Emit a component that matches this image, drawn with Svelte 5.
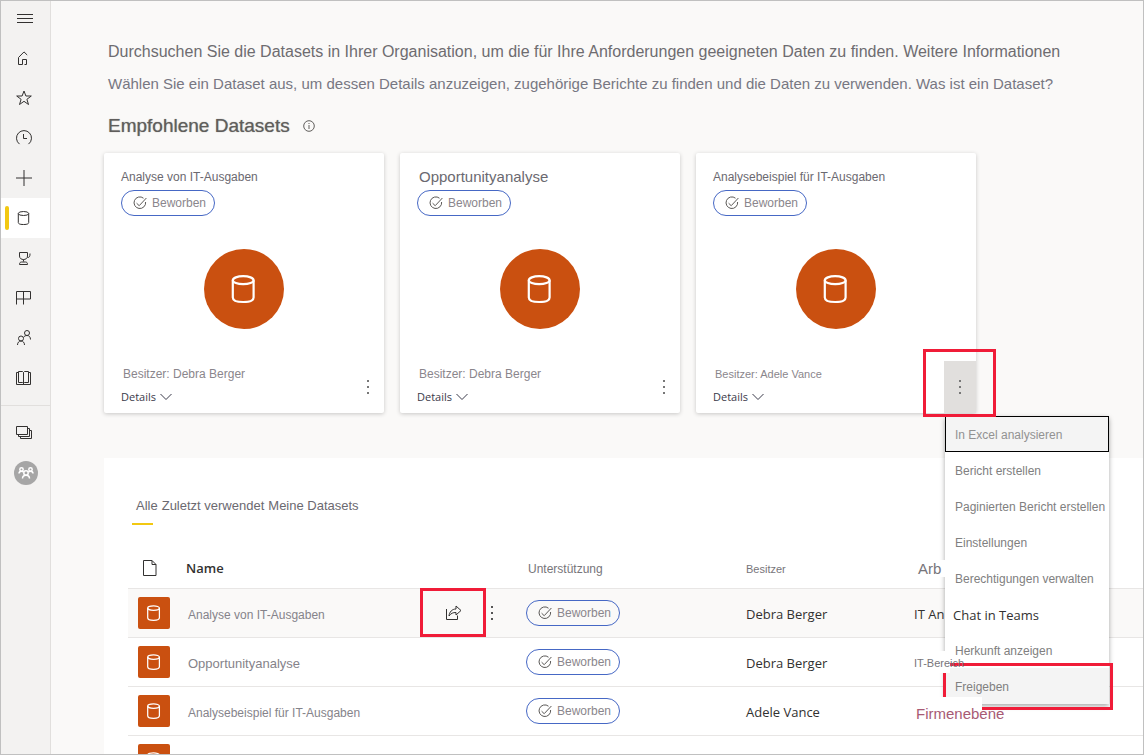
<script lang="ts">
	type IconName = 'menu' | 'home' | 'star' | 'clock' | 'plus' | 'data' | 'goals' | 'apps' | 'people' | 'book' | 'workspaces';

	const navItems: { icon: IconName; label: string }[] = [
		{ icon: 'menu', label: 'Navigation' },
		{ icon: 'home', label: 'Start' },
		{ icon: 'star', label: 'Favoriten' },
		{ icon: 'clock', label: 'Zuletzt verwendet' },
		{ icon: 'plus', label: 'Erstellen' },
		{ icon: 'data', label: 'Datasets' },
		{ icon: 'goals', label: 'Ziele' },
		{ icon: 'apps', label: 'Apps' },
		{ icon: 'people', label: 'Für mich freigegeben' },
		{ icon: 'book', label: 'Lernen' }
	];

	const cards = [
		{ title: 'Analyse von IT-Ausgaben', owner: 'Debra Berger' },
		{ title: 'Opportunityanalyse', owner: 'Debra Berger', large: true },
		{ title: 'Analysebeispiel für IT-Ausgaben', owner: 'Adele Vance', small: true, open: true }
	];

	const menuItems = [
		'In Excel analysieren',
		'Bericht erstellen',
		'Paginierten Bericht erstellen',
		'Einstellungen',
		'Berechtigungen verwalten',
		'Chat in Teams',
		'Herkunft anzeigen',
		'Freigeben'
	];

	const tabs = ['Alle', 'Zuletzt verwendet', 'Meine Datasets'];

	const rows = [
		{ name: 'Analyse von IT-Ausgaben', owner: 'Debra Berger', area: 'IT An', kind: 'plain' },
		{ name: 'Opportunityanalyse', owner: 'Debra Berger', area: 'IT-Bereich', kind: 'small', large: true },
		{ name: 'Analysebeispiel für IT-Ausgaben', owner: 'Adele Vance', area: 'Firmenebene', kind: 'accent' }
	];

	let activeNav = $state('data');
	let activeTab = $state('Alle');
	let selectedRow = $state(0);
</script>

{#snippet cylinder(size: number)}
	<svg width={size} height={size} viewBox="0 0 16 16" fill="none" stroke="currentColor" stroke-width="1.1" aria-hidden="true">
		<ellipse cx="7.6" cy="3.6" rx="5.2" ry="2" />
		<path d="M2.4 3.600v8.600c0 1.200 1 2.300 5.200 2.300s5.200-1.100 5.200-2.300V3.600" />
	</svg>
{/snippet}

{#snippet dots()}
	<svg width="4" height="16" viewBox="0 0 4 16" fill="currentColor" shape-rendering="crispEdges" aria-hidden="true">
		<path d="M1 1h2v2H1zM1 7h2v2H1zM1 13h2v2H1z" />
	</svg>
{/snippet}

{#snippet badge()}
	<span class="badge">
		<svg width="14" height="14" viewBox="0 0 14 14" fill="none" stroke="#5a5856" aria-hidden="true">
			<path d="M10.500 2.200A5.800 5.800 0 1 0 12.600 6" />
			<path d="M3.600 7.200l2.600 2.500L13.400 2" />
		</svg>
		Beworben
	</span>
{/snippet}

{#snippet navIcon(name: IconName)}
	<svg width="18" height="18" viewBox="0 0 18 18" fill="none" stroke="currentColor" aria-hidden="true">
		{#if name === 'menu'}
			<path d="M2 5.500h16M2 9.500h16M2 13.500h16" />
		{:else if name === 'home'}
			<path d="M12.200 6L9 2.900 3.500 8.500v7H7.500v-5h4v5H9.500" />
		{:else if name === 'star'}
			<path d="M9 2l1.900 5h5.400l-4.400 3.300 1.600 5.200L9 12.300l-4.500 3.200 1.600-5.200L1.700 7h5.400z" />
		{:else if name === 'clock'}
			<path d="M4.500 15.100A7.500 7.500 0 1 1 13.500 15.100M8.500 5v4.500h3.500" />
		{:else if name === 'plus'}
			<path d="M1 9h16M9 1v16" />
		{:else if name === 'data'}
			<ellipse cx="8.500" cy="4.500" rx="5.200" ry="2" />
			<path d="M3.300 4.500v9c0 1 .8 2 5.200 2s5.200-1 5.200-2v-9" />
		{:else if name === 'goals'}
			<path d="M4.500 3.500h8v3.500c0 2.500-2 3.500-4 3.500s-4-1-4-3.500zM8.500 10.500v2M4.500 15.500c0-2 1-2.500 2-2.500h4c1 0 2 .5 2 2.500zM12.500 8.500c2 0 2.500-1 2.500-4" />
		{:else if name === 'apps'}
			<path d="M1.500 15.500v-13h14v7.500h-14M8.500 2.500v13" />
		{:else if name === 'people'}
			<circle cx="6" cy="9.500" r="2.500" />
			<circle cx="12" cy="4" r="2.500" />
			<path d="M2.500 16c0-2.500 1.500-4 3.500-4s3.500 1.500 3.500 4M8.500 8.500c.5-1.200 1.800-2 3.500-2 2.200 0 3.500 1.500 3.500 4" />
		{:else if name === 'book'}
			<path d="M3.500 2.500h4l1 1 1-1h4v11h-4l-1 1-1-1h-4zM8.500 3.500v12M3.500 3.500h-2v12h14v-12h-2" />
		{:else}
			<path d="M1.500 2.500h11v8h-11zM12.500 4.500h2v8h-11v-2M14.500 6.500h2v8h-11v-2" />
		{/if}
	</svg>
{/snippet}

<div class="app">
	<nav class="rail" aria-label="Hauptnavigation">
		{#each navItems as item}
			<button
				class="rail-item"
				class:active={activeNav === item.icon}
				aria-label={item.label}
				onclick={() => (activeNav = item.icon)}
			>
				{@render navIcon(item.icon)}
			</button>
		{/each}
		<hr />
		<button class="rail-item" aria-label="Arbeitsbereiche">{@render navIcon('workspaces')}</button>
		<button class="rail-item" aria-label="Mein Arbeitsbereich">
			<svg width="24" height="24" viewBox="0 0 24 24" fill="none" stroke="#fff" stroke-width="1.500" aria-hidden="true">
				<circle cx="12" cy="12" r="12" fill="#a6a6a6" stroke="none" />
				<circle cx="7.500" cy="8.500" r="1.700" />
				<circle cx="16.500" cy="8.500" r="1.700" />
				<circle cx="12" cy="12" r="2.200" />
				<path d="M5 12.500c0-1.500 1-2.300 2.500-2.300 1 0 1.600.3 2 1M19 12.500c0-1.500-1-2.300-2.500-2.300-1 0-1.600.3-2 1M8.500 17.500c0-2 1.200-3.300 3.500-3.300s3.500 1.300 3.500 3.300" />
			</svg>
		</button>
	</nav>

	<main>
		<header>
			<p class="intro">
				Durchsuchen Sie die Datasets in Ihrer Organisation, um die für Ihre Anforderungen geeigneten Daten zu finden.
				Weitere Informationen
			</p>
			<p class="hint">
				Wählen Sie ein Dataset aus, um dessen Details anzuzeigen, zugehörige Berichte zu finden und die Daten zu
				verwenden. Was ist ein Dataset?
			</p>
			<h1>
				Empfohlene Datasets
				<svg width="12" height="12" viewBox="0 0 12 12" fill="none" stroke="#605e5c" aria-hidden="true">
					<circle cx="6" cy="6" r="5.300" />
					<path d="M6 5v4M6 3v1" />
				</svg>
			</h1>
		</header>

		<section class="cards">
			{#each cards as card}
				<article class="card">
					<div class="card-body">
						<h2 class:large={card.large}>{card.title}</h2>
						{@render badge()}
						<div class="disc">{@render cylinder(32)}</div>
					</div>
					<div class="card-footer">
						<div class="card-info">
							<p class="owner" class:small={card.small}>Besitzer: {card.owner}</p>
							<button class="details">
								Details
								<svg width="12" height="8" viewBox="0 0 12 8" fill="none" stroke="currentColor" aria-hidden="true">
									<path d="M.5 1L6 6.500 11.500 1" />
								</svg>
							</button>
						</div>
						<div class="more-wrap">
							<button class="more" class:open={card.open} aria-label="Weitere Optionen">{@render dots()}</button>
							{#if card.open}
								<span class="mark mark-more"></span>
								<ul class="menu">
									{#each menuItems as item, index}
										<li>
											<button
												class:focused={index === 0}
												class:hovered={index === menuItems.length - 1}
												class:segoe={item === 'Chat in Teams'}>{item}</button
											>
											{#if index === menuItems.length - 1}
												<span class="mark mark-share-item"></span>
											{/if}
										</li>
									{/each}
								</ul>
							{/if}
						</div>
					</div>
				</article>
			{/each}
		</section>

		<section class="panel">
			<div class="tabs">
				{#each tabs as tab}
					<button class:active={activeTab === tab} onclick={() => (activeTab = tab)}>{tab}</button>
				{/each}
			</div>

			<table>
				<colgroup>
					<col class="col-icon" />
					<col class="col-name" />
					<col class="col-badge" />
					<col class="col-owner" />
					<col />
				</colgroup>
				<thead>
					<tr>
						<th>
							<svg class="file" width="14" height="16" viewBox="0 0 14 16" fill="none" stroke="#323130" aria-label="Typ">
								<path d="M.5.5h8.500l4 4v11H.5zM9 .5v4h4" />
							</svg>
						</th>
						<th class="strong">Name</th>
						<th class="inset">Unterstützung</th>
						<th class="tiny">Besitzer</th>
						<th><span class="area head">Arb</span></th>
					</tr>
				</thead>
				<tbody>
					{#each rows as row, index}
						<tr class:selected={selectedRow === index} onclick={() => (selectedRow = index)}>
							<td><span class="tile">{@render cylinder(18)}</span></td>
							<td>
								<div class="name">
									<span class="label" class:large={row.large}>{row.name}</span>
									{#if selectedRow === index}
										<button class="share" aria-label="Freigeben">
											<svg width="18" height="18" viewBox="0 0 18 18" fill="none" stroke="currentColor" aria-hidden="true">
												<path d="M2.500 5v10.500h11v-4" />
												<path d="M12 2l5 4.500-5 4.500V8.500c-3 0-5 .7-7 3.500.4-4 3-7 7-7z" />
											</svg>
											<span class="mark mark-share"></span>
										</button>
										<button class="row-more" aria-label="Weitere Optionen">{@render dots()}</button>
									{/if}
								</div>
							</td>
							<td>{@render badge()}</td>
							<td class="person">{row.owner}</td>
							<td><span class="area {row.kind}">{row.area}</span></td>
						</tr>
					{/each}
					<tr>
						<td><span class="tile">{@render cylinder(18)}</span></td>
						<td></td>
						<td></td>
						<td></td>
						<td></td>
					</tr>
				</tbody>
			</table>
		</section>
	</main>
</div>

<style>
	:global(body) {
		margin: 0;
	}

	.app {
		display: flex;
		box-sizing: border-box;
		height: 100vh;
		overflow: hidden;
		border: 1px solid #c0c0c0;
		background: #faf9f8;
		color: #77757a;
		font-family: 'Liberation Sans', Arial, sans-serif;
		font-size: 12px;
	}

	button {
		padding: 0;
		border: 0;
		background: none;
		color: inherit;
		font: inherit;
		cursor: pointer;
	}

	p,
	h1,
	h2 {
		margin: 0;
		font-weight: normal;
	}

	svg {
		display: block;
		flex: none;
	}

	.rail {
		flex: none;
		width: 49px;
		border-right: 1px solid #e1dfdd;
		background: #f3f2f1;
		color: #323130;
	}

	.rail-item {
		display: flex;
		align-items: center;
		box-sizing: border-box;
		width: 100%;
		height: 40px;
		padding-left: 14px;
	}

	.rail-item:first-child {
		height: 34px;
		margin-bottom: 3px;
	}

	.rail-item:last-child {
		padding-left: 13px;
	}

	.rail-item.active {
		position: relative;
		background: #fff;
	}

	.rail-item.active::before {
		content: '';
		position: absolute;
		left: 4px;
		top: 8px;
		width: 4px;
		height: 24px;
		border-radius: 2px;
		background: #f2c811;
	}

	hr {
		margin: 7px 0;
		border: 0;
		border-top: 1px solid #e1dfdd;
	}

	main {
		flex: 1;
		display: flex;
		flex-direction: column;
		min-width: 0;
		padding: 35px 0 0 53px;
	}

	header {
		padding-left: 4px;
		line-height: 32px;
		white-space: nowrap;
	}

	.intro {
		font-size: 16px;
		color: #6e6c70;
	}

	.hint {
		font-size: 15px;
		color: #777782;
	}

	h1 {
		display: flex;
		align-items: center;
		gap: 13px;
		margin: 10px 0 11px;
		font-size: 19px;
		color: #605e5c;
		text-shadow: 0 0 1px #8a8886;
	}

	.cards {
		display: flex;
		gap: 16px;
	}

	.card {
		width: 280px;
		border-radius: 2px;
		background: #fff;
		box-shadow: 0 1px 4px rgba(0, 0, 0, 0.2);
	}

	.card-body {
		padding: 12px 17px 0;
	}

	h2 {
		margin-bottom: 1px;
		font-size: 12px;
		line-height: 24px;
		color: #6b6970;
	}

	h2.large {
		padding-left: 2px;
		font-size: 15px;
	}

	.badge {
		display: flex;
		align-items: center;
		gap: 5px;
		box-sizing: border-box;
		width: 94px;
		height: 26px;
		padding-left: 11px;
		border: 1px solid #4668c5;
		border-radius: 13px;
		color: #8a868c;
	}

	.disc {
		display: grid;
		place-items: center;
		width: 80px;
		height: 80px;
		margin: 33px auto 0;
		border-radius: 50%;
		background: #ca5010;
		color: #fff;
	}

	.card-footer {
		display: flex;
		justify-content: space-between;
		margin-top: 32px;
		padding-left: 17px;
	}

	.owner {
		padding: 3px 0 0 2px;
		line-height: 20px;
		color: #8a868c;
	}

	.owner.small {
		font-size: 11px;
	}

	.details {
		display: flex;
		align-items: center;
		gap: 4px;
		margin-top: 3px;
		font-family: 'Open Sans', sans-serif;
		font-size: 11px;
		line-height: 20px;
		color: #3b3a4a;
	}

	.more-wrap {
		position: relative;
	}

	.more {
		display: grid;
		place-items: center;
		width: 32px;
		height: 52px;
		color: #777;
	}

	.more.open {
		background: #e1dfdd;
	}

	.mark {
		position: absolute;
		box-sizing: border-box;
		border: 3px solid #f01c38;
		pointer-events: none;
	}

	.mark-more {
		z-index: 3;
		top: -12px;
		left: -21px;
		width: 73px;
		height: 68px;
	}

	.menu {
		position: absolute;
		z-index: 2;
		top: 55px;
		left: 1px;
		width: 164px;
		margin: 0;
		padding: 0;
		list-style: none;
		border-radius: 2px;
		background: #fff;
		box-shadow: 0 2px 5px rgba(0, 0, 0, 0.35);
	}

	.menu li {
		position: relative;
	}

	.menu button {
		display: block;
		box-sizing: border-box;
		width: 100%;
		height: 36px;
		padding: 2px 0 0 10px;
		text-align: left;
		white-space: nowrap;
		color: #808080;
	}

	.menu .focused {
		padding-left: 9px;
		border: 1px solid #000;
		background: #f4f4f4;
		color: #929292;
	}

	.menu .hovered {
		background: #f4f4f4;
	}

	.menu .segoe {
		padding-left: 8px;
		font-family: 'Open Sans', sans-serif;
		font-size: 13px;
		color: #323130;
	}

	.mark-share-item {
		top: -5px;
		left: -2px;
		width: 170px;
		height: 47px;
	}

	.panel {
		flex: 1;
		margin-top: 45px;
		padding: 34px 0 0 24px;
		background: #fff;
	}

	.tabs {
		display: flex;
		gap: 4px;
		padding-left: 8px;
	}

	.tabs button {
		position: relative;
		padding-bottom: 5px;
		font-size: 13px;
		line-height: 28px;
		color: #6b6970;
	}

	.tabs .active::after {
		content: '';
		position: absolute;
		bottom: 0;
		left: -4px;
		width: 21px;
		height: 2px;
		background: #f2c811;
	}

	table {
		width: 100%;
		margin-top: 23px;
		table-layout: fixed;
		border-spacing: 0;
	}

	.col-icon {
		width: 58px;
	}

	.col-name {
		width: 340px;
	}

	.col-badge {
		width: 220px;
	}

	.col-owner {
		width: 168px;
	}

	th,
	td {
		box-sizing: border-box;
		height: 49px;
		padding: 0;
		border-bottom: 1px solid #e8e6e5;
		text-align: left;
		font-weight: normal;
		white-space: nowrap;
	}

	th {
		height: 41px;
	}

	th.strong {
		font-family: 'Open Sans', sans-serif;
		font-size: 13px;
		font-weight: 600;
		color: #323130;
	}

	th.inset {
		padding: 2px 0 0 2px;
	}

	th.tiny {
		padding-top: 2px;
		font-size: 11px;
	}

	.file {
		margin-left: 15px;
	}

	.selected {
		background: #faf9f8;
	}

	.tile {
		display: grid;
		place-items: center;
		width: 32px;
		height: 32px;
		margin-left: 10px;
		border-radius: 2px;
		background: #ca5010;
		color: #fff;
	}

	.name {
		display: flex;
		align-items: center;
		height: 48px;
		padding-right: 32px;
		color: #85838a;
	}

	.label {
		padding: 3px 0 0 2px;
	}

	.label.large {
		font-size: 13px;
	}

	.share {
		position: relative;
		display: grid;
		place-items: center;
		width: 66px;
		height: 48px;
		margin-left: auto;
		color: #323130;
	}

	.mark-share {
		top: -1px;
		left: 0;
		width: 66px;
		height: 49px;
	}

	.row-more {
		padding-left: 4px;
		color: #555;
	}

	.person,
	.plain {
		padding-top: 2px;
		font-family: 'Open Sans', sans-serif;
		font-size: 13px;
		color: #323130;
	}

	/* the area labels run on over the edge of the open menu */
	.area {
		display: block;
	}

	.area.head,
	.area.small,
	.area.accent {
		position: relative;
		z-index: 3;
		background: #fff;
	}

	.area.head {
		width: 27px;
		padding-left: 4px;
		font-size: 15px;
	}

	.area.small {
		width: 36px;
		padding-top: 2px;
		font-size: 11px;
		line-height: 20px;
	}

	.area.accent {
		width: 66px;
		padding: 6px 0 0 2px;
		font-size: 15px;
		line-height: 22px;
		color: #a85a74;
	}
</style>
